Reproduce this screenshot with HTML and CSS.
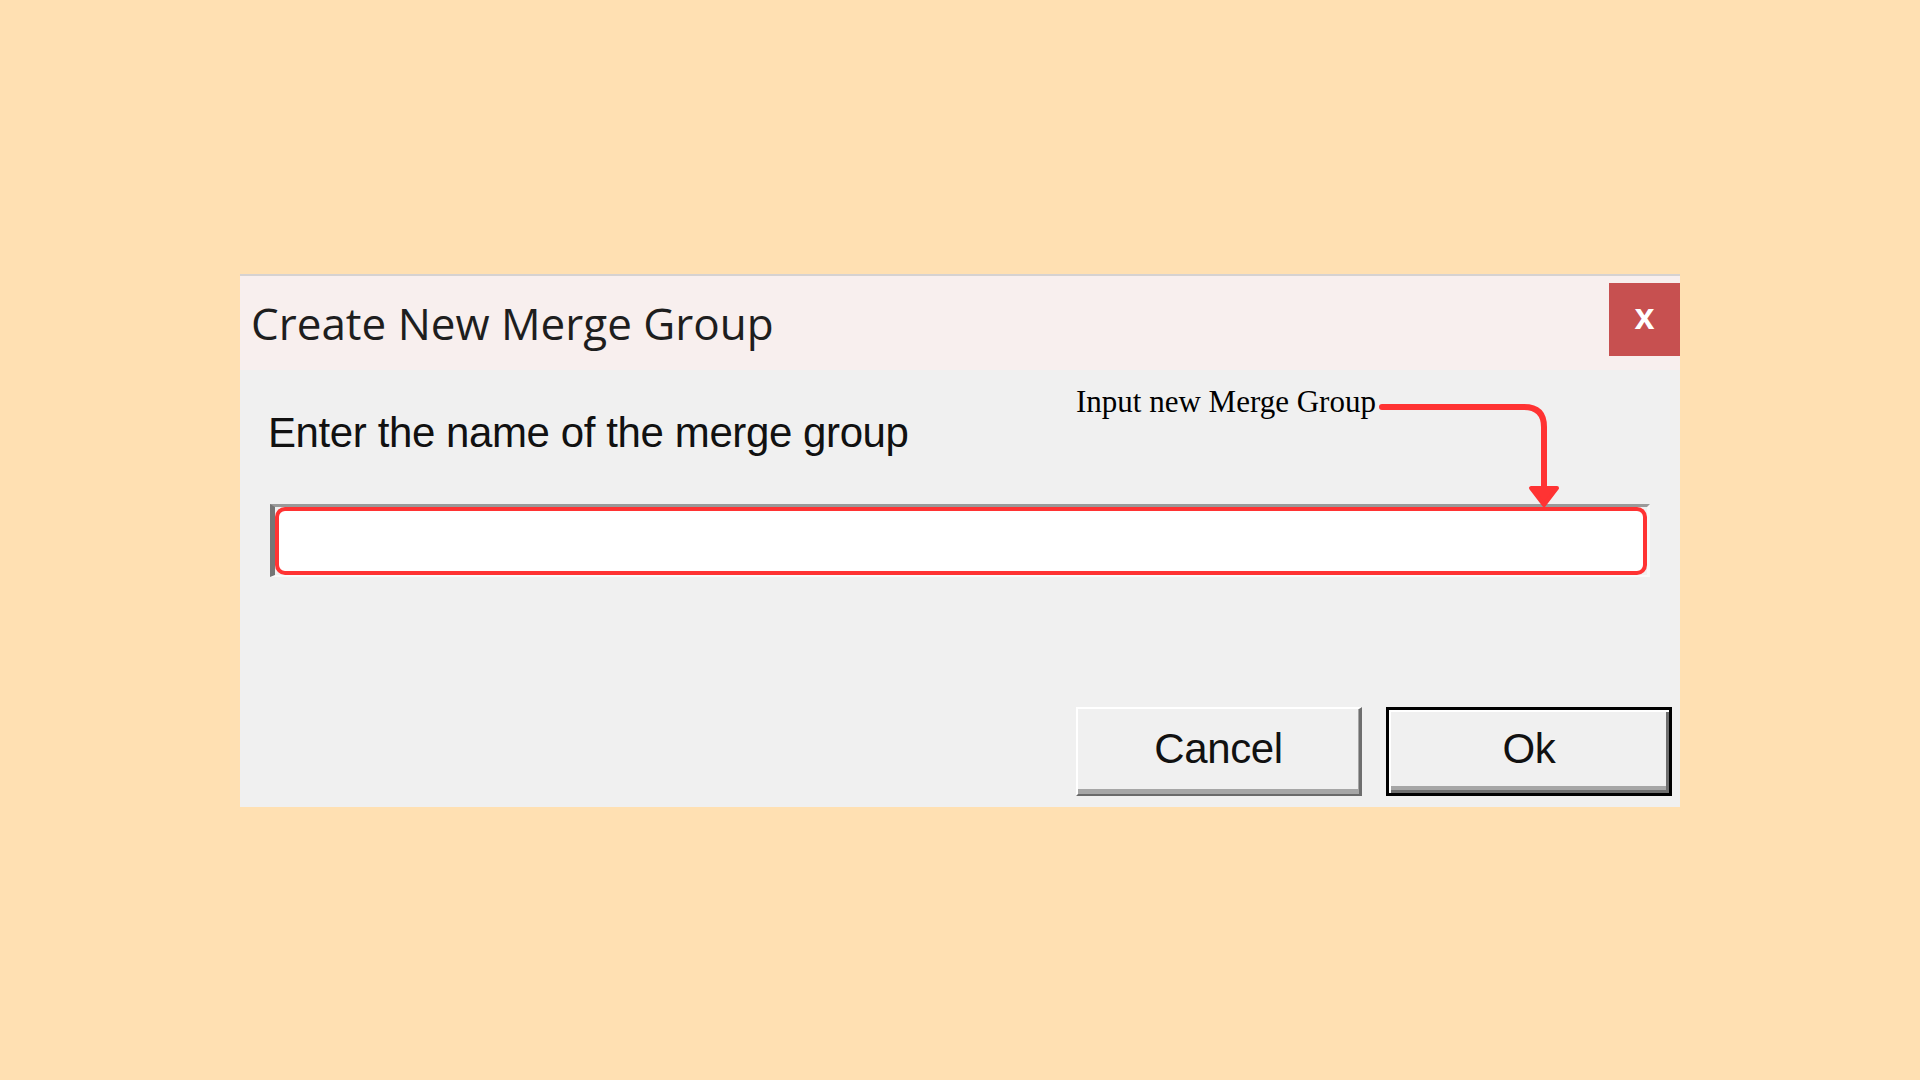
FILE: index.html
```html
<!DOCTYPE html>
<html lang="en">
<head>
<meta charset="utf-8">
<title>Create New Merge Group</title>
<link rel="stylesheet" href="styles.css">
</head>
<body>
<div class="dialog">
  <div class="titlebar">
    <div class="title">Create New Merge Group</div>
    <div class="close">x</div>
  </div>
  <div class="content">
    <div class="prompt">Enter the name of the merge group</div>
    <div class="field"><div class="input"></div></div>
    <div class="buttons">
      <div class="btn cancel">Cancel</div>
      <div class="btn ok">Ok</div>
    </div>
  </div>
  <div class="note">Input new Merge Group</div>
  <svg class="arrow" width="200" height="125" viewBox="0 0 200 125">
    <path d="M7 12 H149 Q169 12 169 32 V95" fill="none" stroke="#ff3333" stroke-width="6" stroke-linecap="round" stroke-linejoin="round"/>
    <polygon points="156,93 182,93 169,110" fill="#ff3333" stroke="#ff3333" stroke-width="4" stroke-linejoin="round"/>
  </svg>
</div>
</body>
</html>
```
FILE: styles.css
```css
html, body {
  margin: 0;
  padding: 0;
}
body {
  background: #ffe0b2;
  height: 100vh;
  display: flex;
  align-items: center;
  justify-content: center;
}
.dialog {
  position: relative;
  width: 1440px;
  height: 533px;
  box-sizing: border-box;
  background: #f0f0f0;
  border-top: 2px solid #d6d2d1;
  display: flex;
  flex-direction: column;
}
.titlebar {
  height: 94px;
  background: #f8efee;
  display: flex;
  justify-content: space-between;
  align-items: flex-start;
  flex: none;
}
.title {
  font-family: "Open Sans", sans-serif;
  font-size: 44px;
  line-height: 60px;
  color: #1e1e1e;
  padding: 17px 0 0 11px;
}
.close {
  width: 71px;
  height: 73px;
  margin-top: 7px;
  background: #c75050;
  color: #fff;
  font-family: "Liberation Sans", sans-serif;
  font-weight: bold;
  font-size: 36px;
  line-height: 68px;
  text-align: center;
}
.content {
  flex: 1;
  display: flex;
  flex-direction: column;
  padding: 39px 30px 11px 30px;
}
.prompt {
  font-family: "Liberation Sans", Arial, sans-serif;
  font-size: 42px;
  line-height: 47px;
  letter-spacing: -0.4px;
  color: #111;
  margin-left: -2px;
}
.field {
  margin-top: 48px;
  border-top: 3px solid #9a9a9a;
  border-left: 5px solid #757575;
  border-right: 3px solid #f8f8f8;
  border-bottom: 2px solid #fafafa;
}
.input {
  height: 68px;
  box-sizing: border-box;
  background: #fff;
  border: 4px solid #ff3333;
  border-radius: 10px;
}
.buttons {
  margin-top: auto;
  margin-right: -22px;
  display: flex;
  justify-content: flex-end;
  gap: 24px;
}
.btn {
  width: 286px;
  height: 89px;
  box-sizing: border-box;
  background: #f0f0f0;
  font-family: "Liberation Sans", Arial, sans-serif;
  font-size: 42px;
  letter-spacing: -0.4px;
  color: #111;
  display: flex;
  align-items: center;
  justify-content: center;
  padding-bottom: 4px;
}
.cancel {
  border-top: 2px solid #ffffff;
  border-left: 2px solid #ffffff;
  border-right: 3px solid #6e6e6e;
  border-bottom: 2px solid #6a6a6a;
  box-shadow: inset -1px -5px 0 #a6a6a6;
}
.ok {
  border: 3px solid #000;
  box-shadow: inset 2px 2px 0 #ffffff, inset -3px -3px 0 #6e6e6e, inset -1px -7px 0 #a6a6a6;
}
.note {
  position: absolute;
  left: 836px;
  top: 108px;
  font-family: "Liberation Serif", "Times New Roman", serif;
  font-size: 31px;
  line-height: 36px;
  color: #000;
  white-space: nowrap;
}
.arrow {
  position: absolute;
  left: 1135px;
  top: 119px;
}
```
